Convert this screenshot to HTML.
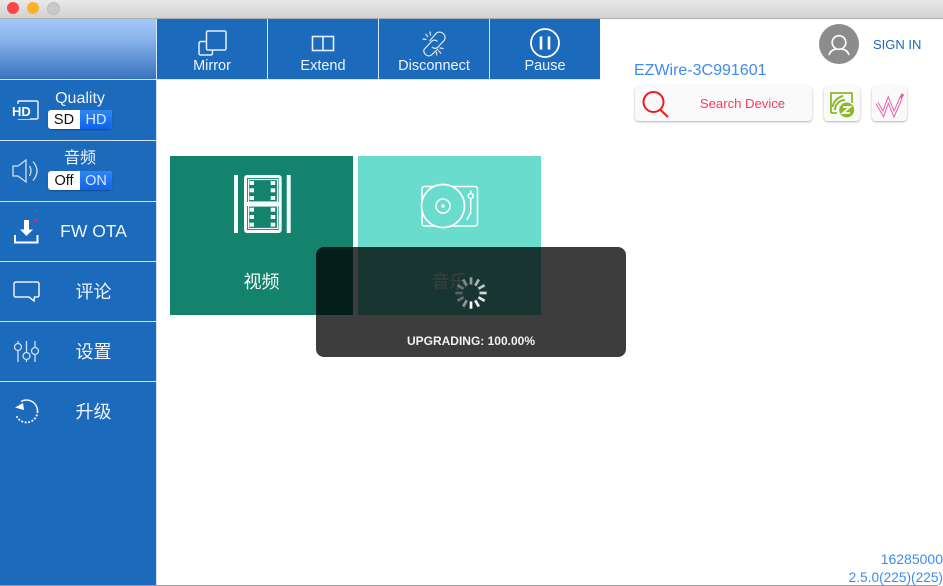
<!DOCTYPE html>
<html>
<head>
<meta charset="utf-8">
<style>
html,body{margin:0;padding:0;width:943px;height:586px;overflow:hidden;background:#fff}
body{position:relative;font-family:"Liberation Sans","Noto Sans CJK SC",sans-serif}
.a{position:absolute}
.t{position:absolute;white-space:nowrap;text-align:center}
svg{position:absolute;overflow:visible}
.w{color:#eef4fb}
.hl{position:absolute;left:0;width:156px;height:1px;background:#d4e3f3}
.vl{position:absolute;top:19px;width:1px;height:60px;background:#d4e3f3}
.sw{position:absolute;left:48px;width:64px;height:19px;border-radius:3px;overflow:hidden;background:#fff;box-shadow:0 1px 1px rgba(0,0,0,.25)}
.sw i{position:absolute;left:32px;top:0;width:32px;height:19px;background:linear-gradient(#2f87f5,#0f62ea)}
.sw span{position:absolute;top:1px;width:32px;text-align:center;font-size:14.5px;line-height:19px;font-style:normal}
.btn{position:absolute;background:#fafafa;border-radius:4px;box-shadow:0 1px 2px rgba(0,0,0,.3)}
</style>
</head>
<body>
<!-- title bar -->
<div class="a" style="left:0;top:0;width:943px;height:18px;background:linear-gradient(#e9e9e9,#d1d1d1)"></div>
<div class="a" style="left:0;top:18px;width:943px;height:1px;background:#aeaeae"></div>
<div class="a" style="left:7px;top:2px;width:12px;height:12px;border-radius:50%;background:#fc4745"></div>
<div class="a" style="left:27px;top:2px;width:12px;height:12px;border-radius:50%;background:#fdb12b"></div>
<div class="a" style="left:47px;top:2px;width:11px;height:11px;border-radius:50%;background:#c9c9c9;border:1px solid #bcbcbc"></div>

<!-- sidebar -->
<div class="a" style="left:0;top:19px;width:156px;height:566px;background:#1b6abb"></div>
<div class="a" style="left:0;top:19px;width:156px;height:60px;background:linear-gradient(#a2c8f8,#8db7ed 30%,#3a72c0)"></div>
<div class="a" style="left:156px;top:19px;width:1px;height:566px;background:#d4e3f3"></div>
<div class="hl" style="top:79px"></div>
<div class="hl" style="top:140px"></div>
<div class="hl" style="top:201px"></div>
<div class="hl" style="top:261px"></div>
<div class="hl" style="top:321px"></div>
<div class="hl" style="top:381px"></div>

<!-- quality -->
<svg style="left:0;top:90px" width="50" height="40" fill="none" stroke="#f2f6fb" stroke-width="1.400">
  <path d="M18 15V11.500Q18 11 19 11H36.500Q38 11 38 12.500V27.500Q38 29 36.500 29H19Q18 29 18 28.500"/>
</svg>
<div class="t" style="left:12px;top:104px;width:18px;font-size:13px;line-height:15px;font-weight:bold;color:#fff;background:#1b6abb">HD</div>
<div class="t w" style="left:40px;top:90px;width:80px;font-size:16px;line-height:18px">Quality</div>
<div class="sw" style="top:110px"><i></i><span style="left:0;color:#111">SD</span><span style="left:32px;color:#d9e8fd">HD</span></div>

<!-- audio -->
<svg style="left:0;top:150px" width="50" height="40" fill="none" stroke="#cfe0f2" stroke-width="1.300">
  <path d="M13 16H18L26 10V32L18 26H13Z"/>
  <path d="M29.500 16Q32.500 21 29.500 26"/>
  <path d="M33 11.500Q41 21 33 30.500"/>
</svg>
<div class="t w" style="left:40px;top:150px;width:80px;font-size:16px;line-height:18px">音频</div>
<div class="sw" style="top:171px"><i></i><span style="left:0;color:#111">Off</span><span style="left:32px;color:#d9e8fd">ON</span></div>

<!-- FW OTA -->
<svg style="left:0;top:205px" width="50" height="50" fill="none" stroke="#fff">
  <path d="M15 30V37.500H37.500V30" stroke-width="2"/>
  <path d="M26.500 15V25" stroke-width="5"/>
  <path d="M20 24.500H33L26.500 31Z" fill="#fff" stroke="none"/>
  <circle cx="35.300" cy="15" r="1.500" fill="#f0245e" stroke="none"/>
</svg>
<div class="t w" style="left:40px;top:220px;width:107px;font-size:17.500px;line-height:22px">FW OTA</div>

<!-- comment -->
<svg style="left:0;top:270px" width="50" height="40" fill="none" stroke="#eaf2fa" stroke-width="1.500">
  <path d="M16 12H37Q39 12 39 14V25Q39 27 37 27H34.500L34 31L29 27H16Q14 27 14 25V14Q14 12 16 12Z"/>
</svg>
<div class="t w" style="left:40px;top:281px;width:107px;font-size:18px;line-height:22px">评论</div>

<!-- settings -->
<svg style="left:0;top:330px" width="50" height="40" fill="none" stroke="#cfe0f2" stroke-width="1.300">
  <path d="M18 11V13.500M18 20.500V32M26.500 11V22.500M26.500 29.500V32M35 11V17.500M35 24.500V32"/>
  <circle cx="18" cy="17" r="3.500"/>
  <circle cx="26.500" cy="26" r="3.500"/>
  <circle cx="35" cy="21" r="3.500"/>
</svg>
<div class="t w" style="left:40px;top:341px;width:107px;font-size:18px;line-height:22px">设置</div>

<!-- upgrade -->
<svg style="left:0;top:390px" width="50" height="40" fill="none" stroke="#eef4fb">
  <path d="M21 11.500A11 11 0 0 1 37.500 21" stroke-width="1.500" stroke-dasharray="20 0"/>
  <path d="M37.500 21A11 11 0 0 1 16.500 26" stroke-width="1.800" stroke-dasharray="2 1.500"/>
  <path d="M15 17.500L23 13L24 20Z" fill="#fff" stroke="none"/>
</svg>
<div class="t w" style="left:40px;top:401px;width:107px;font-size:18px;line-height:22px">升级</div>

<!-- toolbar -->
<div class="a" style="left:157px;top:19px;width:443px;height:60px;background:#1b6abb"></div>
<div class="a" style="left:157px;top:79px;width:443px;height:1px;background:#d4e3f3"></div>
<div class="vl" style="left:267px"></div>
<div class="vl" style="left:378px"></div>
<div class="vl" style="left:489px"></div>

<svg style="left:157px;top:19px" width="443" height="60" fill="none" stroke="#e6eff9">
  <!-- mirror -->
  <rect x="49.500" y="12" width="19.500" height="19" rx="1.500" stroke-width="1.500"/>
  <path d="M49 22.500H44Q42 22.500 42 24.500V34Q42 36 44 36H53.500Q55.500 36 55.500 34V31" stroke-width="1.500"/>
  <!-- extend -->
  <rect x="155.500" y="17.500" width="21" height="14" stroke-width="1.600"/>
  <path d="M166 17.500V31.500" stroke-width="1.600"/>
  <!-- disconnect -->
  <g stroke-width="1.200" stroke="#dce9f6">
    <path d="M272.500 22L279.500 14A5.500 5.500 0 0 1 287.500 21L280.500 28.500A4 4 0 0 1 275 28"/>
    <path d="M280.500 22.500A4 4 0 0 0 275 22L267 30.500A5 5 0 0 0 274.500 36L281 30"/>
    <path d="M268.500 15L271 18M273 12.500L273.500 16.500M265.500 20L269.500 20.500M282.500 29L286.500 29.500M281.500 31.500L284 34.500M279.500 33L279.800 36.500"/>
  </g>
  <!-- pause -->
  <circle cx="388" cy="24" r="14" stroke-width="1.800" stroke="#fff"/>
  <path d="M384 17.500V30.500M392 17.500V30.500" stroke-width="2.600" stroke="#fff"/>
</svg>
<div class="t w" style="left:157px;top:57px;width:110px;font-size:14.500px;line-height:18px">Mirror</div>
<div class="t w" style="left:268px;top:57px;width:110px;font-size:14.500px;line-height:18px">Extend</div>
<div class="t w" style="left:379px;top:57px;width:110px;font-size:14.500px;line-height:18px">Disconnect</div>
<div class="t w" style="left:490px;top:57px;width:110px;font-size:14.500px;line-height:18px">Pause</div>

<!-- top right -->
<div class="a" style="left:819px;top:24px;width:40px;height:40px;border-radius:50%;background:#8c8c8c"></div>
<svg style="left:819px;top:24px" width="40" height="40" fill="none" stroke="#fff" stroke-width="1.700">
  <circle cx="20" cy="18.500" r="6.800"/>
  <path d="M10 31Q11.500 26 17 25M30 31Q28.500 26 23 25"/>
</svg>
<div class="t" style="left:873px;top:37px;font-size:13px;line-height:16px;color:#1b6abb">SIGN IN</div>
<div class="t" style="left:634px;top:62px;font-size:16px;line-height:18px;color:#3d8bf0">EZWire-3C991601</div>

<div class="btn" style="left:635px;top:86px;width:177px;height:35px"></div>
<svg style="left:635px;top:86px" width="50" height="35" fill="none" stroke="#ee1b24" stroke-width="2">
  <circle cx="18.500" cy="16" r="10"/>
  <path d="M25.500 24L33 31" stroke-width="2.200"/>
</svg>
<div class="t" style="left:680px;top:96px;width:125px;font-size:13.100px;line-height:16px;color:#fb3b5d">Search Device</div>

<div class="btn" style="left:824px;top:86px;width:36px;height:35px"></div>
<svg style="left:824px;top:86px" width="36" height="35" fill="none" stroke="#8cb92a" stroke-width="1.800">
  <path d="M7 27V7H28V17"/>
  <path d="M7 27H13"/>
  <path d="M11 24A10 10 0 0 1 21 14M8.500 21A14 14 0 0 1 19 10" stroke-width="2"/>
  <circle cx="22.700" cy="24" r="8" fill="#8cb92a" stroke="#fafafa" stroke-width="1"/>
  <path d="M19 21H26L19 27H26" stroke="#fff" stroke-width="1.800"/>
</svg>

<div class="btn" style="left:872px;top:86px;width:35px;height:35px"></div>
<svg style="left:872px;top:86px" width="35" height="35" fill="none">
  <path d="M5 17L11.300 28L16.300 14L22 28L29 12" stroke="#e95fb0" stroke-width="3.400"/>
  <path d="M5 17L11.300 28L16.300 14L22 28L29 12" stroke="#fafafa" stroke-width="1.400"/>
  <path d="M28.500 12L31 8" stroke="#e95fb0" stroke-width="3"/>
</svg>

<!-- tiles -->
<div class="a" style="left:170px;top:156px;width:183px;height:159px;background:#13836e"></div>
<div class="a" style="left:358px;top:156px;width:183px;height:159px;background:#6adccd"></div>
<svg style="left:170px;top:156px" width="183" height="100">
  <g fill="#f4fbf9">
    <rect x="64" y="19" width="4" height="58"/>
    <rect x="116.700" y="19" width="4" height="58"/>
    <rect x="79.500" y="25" width="4.500" height="4"/><rect x="79.500" y="32.300" width="4.500" height="4"/><rect x="79.500" y="40" width="4.500" height="4"/>
    <rect x="100.700" y="25" width="4.500" height="4"/><rect x="100.700" y="32.300" width="4.500" height="4"/><rect x="100.700" y="40" width="4.500" height="4"/>
    <rect x="79.500" y="51.700" width="4.500" height="4"/><rect x="79.500" y="59" width="4.500" height="4"/><rect x="79.500" y="66.700" width="4.500" height="4"/>
    <rect x="100.700" y="51.700" width="4.500" height="4"/><rect x="100.700" y="59" width="4.500" height="4"/><rect x="100.700" y="66.700" width="4.500" height="4"/>
    <rect x="75" y="46" width="36" height="4"/>
  </g>
  <g fill="none" stroke="#f4fbf9">
    <rect x="75.500" y="20.500" width="34.700" height="55" rx="1.500" stroke-width="3"/>
    <rect x="78.500" y="23.500" width="29" height="22.500" stroke-width="1.200"/>
    <rect x="78.500" y="50" width="29" height="22.500" stroke-width="1.200"/>
  </g>
</svg>
<svg style="left:358px;top:156px" width="183" height="100" fill="none" stroke="#fff" stroke-width="1.500">
  <rect x="64" y="30.500" width="55.500" height="39.500" rx="2.500"/>
  <circle cx="85" cy="50" r="21.500" fill="#6adccd" stroke-width="1.700"/>
  <circle cx="85" cy="50" r="7" stroke-width="1.500"/>
  <circle cx="85" cy="50" r="1.200" fill="#fff" stroke-width="1"/>
  <path d="M112.700 34.500V37.500"/>
  <circle cx="112.700" cy="40" r="2.500"/>
  <path d="M112.700 43V57L108.700 64"/>
</svg>
<div class="t" style="left:170px;top:270px;width:183px;font-size:18px;line-height:24px;color:#f4fbf9">视频</div>
<div class="t" style="left:358px;top:270px;width:183px;font-size:18px;line-height:24px;color:#fff">音乐</div>

<!-- HUD -->
<div class="a" style="left:316px;top:247px;width:310px;height:110px;border-radius:8px;background:rgba(0,0,0,.76)"></div>
<svg style="left:451px;top:273px" width="40" height="40" stroke-width="2.700">
  <g transform="translate(20,20)" stroke="#fff">
    <line x1="0" y1="8.500" x2="0" y2="15.700" stroke-opacity="1"/>
    <line x1="4.250" y1="7.360" x2="7.850" y2="13.600" stroke-opacity=".95"/>
    <line x1="7.360" y1="4.250" x2="13.600" y2="7.850" stroke-opacity=".88"/>
    <line x1="8.500" y1="0" x2="15.700" y2="0" stroke-opacity=".8"/>
    <line x1="7.360" y1="-4.250" x2="13.600" y2="-7.850" stroke-opacity=".72"/>
    <line x1="4.250" y1="-7.360" x2="7.850" y2="-13.600" stroke-opacity=".62"/>
    <line x1="0" y1="-8.500" x2="0" y2="-15.700" stroke-opacity=".52"/>
    <line x1="-4.250" y1="-7.360" x2="-7.850" y2="-13.600" stroke-opacity=".42"/>
    <line x1="-7.360" y1="-4.250" x2="-13.600" y2="-7.850" stroke-opacity=".32"/>
    <line x1="-8.500" y1="0" x2="-15.700" y2="0" stroke-opacity=".25"/>
    <line x1="-7.360" y1="4.250" x2="-13.600" y2="7.850" stroke-opacity=".3"/>
    <line x1="-4.250" y1="7.360" x2="-7.850" y2="13.600" stroke-opacity=".5"/>
  </g>
</svg>
<div class="t" style="left:316px;top:334px;width:310px;font-size:12px;line-height:15px;font-weight:bold;color:#f2f2f2">UPGRADING: 100.00%</div>

<!-- version -->
<div class="t" style="right:0;top:551px;font-size:14px;line-height:16px;color:#3d8bf0">16285000</div>
<div class="t" style="right:0;top:570px;font-size:13.700px;line-height:16px;color:#3d8bf0">2.5.0(225)(225)</div>
<div class="a" style="left:0;top:585px;width:938px;height:1px;background:#9a9a9a"></div>
</body>
</html>
